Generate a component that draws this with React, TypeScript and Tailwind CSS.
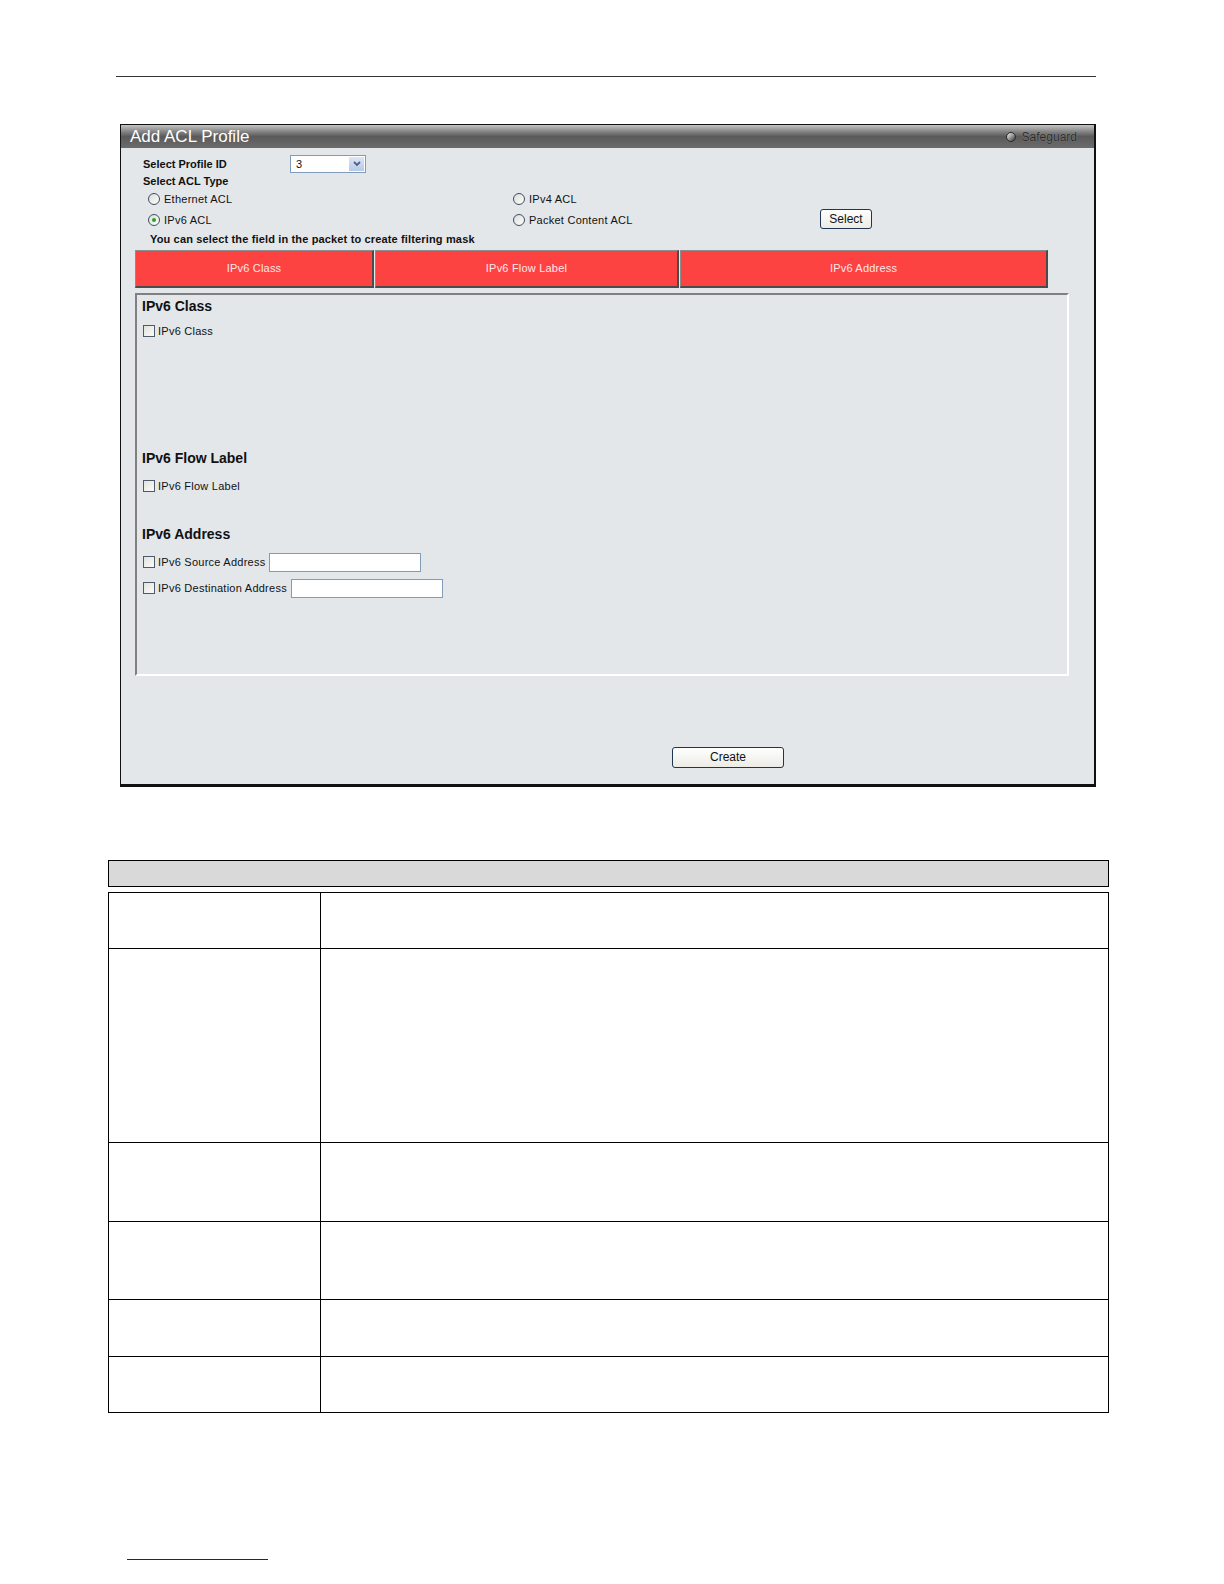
import React from "react";

const F = { fontFamily: '"Liberation Sans", Arial, sans-serif' };

function Radio({ checked, label }: { checked?: boolean; label: string }) {
  return (
    <div className="flex items-center">
      <div className="w-[12px] h-[12px] rounded-full border border-[#3d4f66] bg-gradient-to-br from-[#dcdcd6] to-[#ffffff] flex items-center justify-center">
        {checked && <div className="w-[4px] h-[4px] rounded-full bg-[#2aa52a]" />}
      </div>
      <span className="ml-[4px] text-[11px] tracking-[0.25px] text-[#111]">{label}</span>
    </div>
  );
}

function Check({ label }: { label: string }) {
  return (
    <div className="flex items-center">
      <div className="w-[12px] h-[12px] border border-[#4e5a6a] bg-gradient-to-br from-[#e2e2dc] to-[#fbfbfb]" />
      <span className="ml-[3px] text-[11px] tracking-[0.25px] text-[#111]">{label}</span>
    </div>
  );
}

function Tab({ w, label }: { w: string; label: string }) {
  return (
    <div
      className={`${w} h-[38px] bg-[#fd4242] border-t border-l border-t-[#8c8c8c] border-l-[#8c8c8c] border-b-2 border-r-2 border-b-[#4b4b4b] border-r-[#4b4b4b] flex items-center justify-center text-[11px] tracking-[0.2px] text-[#ffe8e8]`}
    >
      {label}
    </div>
  );
}

export default function App() {
  const rows = [56, 194, 79, 78, 57, 56];
  return (
    <div className="w-full bg-white pt-[76px] pb-[10px]" style={F}>
      <div className="ml-[116px] w-[980px] h-px bg-[#333]" />
      {/* panel */}
      <div className="ml-[120px] mt-[47px] w-[976px] h-[663px] border-l border-t border-r-2 border-b-[3px] border-[#111] bg-[#e3e7ea] flex flex-col">
        <div className="h-[23px] bg-gradient-to-b from-[#c4c4c4] via-[#5a5a5a] to-[#6c6c6c] flex items-center justify-between pl-[9px] pr-[17px]">
          <span className="text-white text-[17px] leading-none">Add ACL Profile</span>
          <div className="flex items-center">
            <div className="w-[10px] h-[10px] rounded-full bg-gradient-to-br from-[#f0f0f0] via-[#999] to-[#333] border border-[#2a2a2a]" />
            <span className="ml-[6px] text-[12px] text-[#2a2a2a]" style={{ textShadow: "0 0 1px #aaa" }}>Safeguard</span>
          </div>
        </div>
        <div className="h-[7px]" />
        {/* row 1 */}
        <div className="h-[18px] flex items-center ml-[22px]">
          <span className="w-[147px] text-[11px] font-bold text-[#111]">Select Profile ID</span>
          <div className="w-[76px] h-[18px] bg-white border border-[#7f9db9] flex items-center justify-between">
            <span className="ml-[5px] text-[11px] text-[#111]">3</span>
            <div className="w-[15px] h-[14px] mr-[1px] bg-gradient-to-b from-[#dce6f4] to-[#b7c9e8] flex items-center justify-center">
              <svg width="8" height="6" viewBox="0 0 8 6"><path d="M1 1 L4 4 L7 1" stroke="#4d6185" strokeWidth="1.8" fill="none" /></svg>
            </div>
          </div>
        </div>
        <div className="h-[16px] flex items-center ml-[22px]">
          <span className="text-[11px] font-bold text-[#111]">Select ACL Type</span>
        </div>
        <div className="h-[20px] flex items-center ml-[27px]">
          <div className="w-[365px]"><Radio label="Ethernet ACL" /></div>
          <Radio label="IPv4 ACL" />
        </div>
        <div className="h-[22px] flex items-center ml-[27px]">
          <div className="w-[365px]"><Radio checked label="IPv6 ACL" /></div>
          <div className="w-[307px]"><Radio label="Packet Content ACL" /></div>
          <button className="w-[52px] h-[20px] -mt-[2px] rounded-[3px] border border-[#1f3550] bg-gradient-to-b from-[#ffffff] to-[#ecebe5] text-[12px] text-[#111] leading-none">Select</button>
        </div>
        <div className="h-[16px] flex items-center ml-[29px]">
          <span className="text-[11px] font-bold text-[#111] tracking-[0.15px]">You can select the field in the packet to create filtering mask</span>
        </div>
        {/* tabs */}
        <div className="mt-[3px] ml-[14px] flex gap-px">
          <Tab w="w-[239px]" label="IPv6 Class" />
          <Tab w="w-[304px]" label="IPv6 Flow Label" />
          <Tab w="w-[368px]" label="IPv6 Address" />
        </div>
        {/* fieldset */}
        <div className="mt-[5px] ml-[14px] w-[934px] h-[383px] border-t-2 border-l-2 border-t-[#808080] border-l-[#808080] border-b-2 border-r-2 border-b-white border-r-white pl-[5px]">
          <div className="h-[22px] flex items-center">
            <span className="text-[14px] font-bold text-[#111]">IPv6 Class</span>
          </div>
          <div className="mt-[3px] h-[22px] flex items-center ml-px">
            <Check label="IPv6 Class" />
          </div>
          <div className="mt-[105px] h-[22px] flex items-center">
            <span className="text-[14px] font-bold text-[#111]">IPv6 Flow Label</span>
          </div>
          <div className="mt-[6px] h-[22px] flex items-center ml-px">
            <Check label="IPv6 Flow Label" />
          </div>
          <div className="mt-[26px] h-[22px] flex items-center">
            <span className="text-[14px] font-bold text-[#111]">IPv6 Address</span>
          </div>
          <div className="mt-[6px] h-[22px] flex items-center ml-px">
            <Check label="IPv6 Source Address" />
            <div className="ml-[4px] w-[152px] h-[19px] bg-white border border-[#7f9db9]" />
          </div>
          <div className="mt-[4px] h-[22px] flex items-center ml-px">
            <Check label="IPv6 Destination Address" />
            <div className="ml-[4px] w-[152px] h-[19px] bg-white border border-[#7f9db9]" />
          </div>
        </div>
        <div className="mt-[68px] ml-[551px]">
          <button className="w-[112px] h-[21px] rounded-[3px] border border-[#1f3550] bg-gradient-to-b from-[#ffffff] to-[#ecebe5] text-[12px] text-[#111] leading-none">Create</button>
        </div>
      </div>
      {/* table */}
      <div className="mt-[73px] ml-[108px] w-[1001px] h-[27px] border border-black bg-[#d9d9d9]" />
      <div className="mt-[5px] ml-[108px] w-[1001px] border-t border-l border-black">
        {rows.map((h, i) => (
          <div key={i} className="flex" style={{ height: h }}>
            <div className="w-[212px] border-r border-b border-black" />
            <div className="flex-1 border-r border-b border-black" />
          </div>
        ))}
      </div>
      <div className="mt-[146px] ml-[127px] w-[141px] h-px bg-[#1a1a99]" />
    </div>
  );
}
